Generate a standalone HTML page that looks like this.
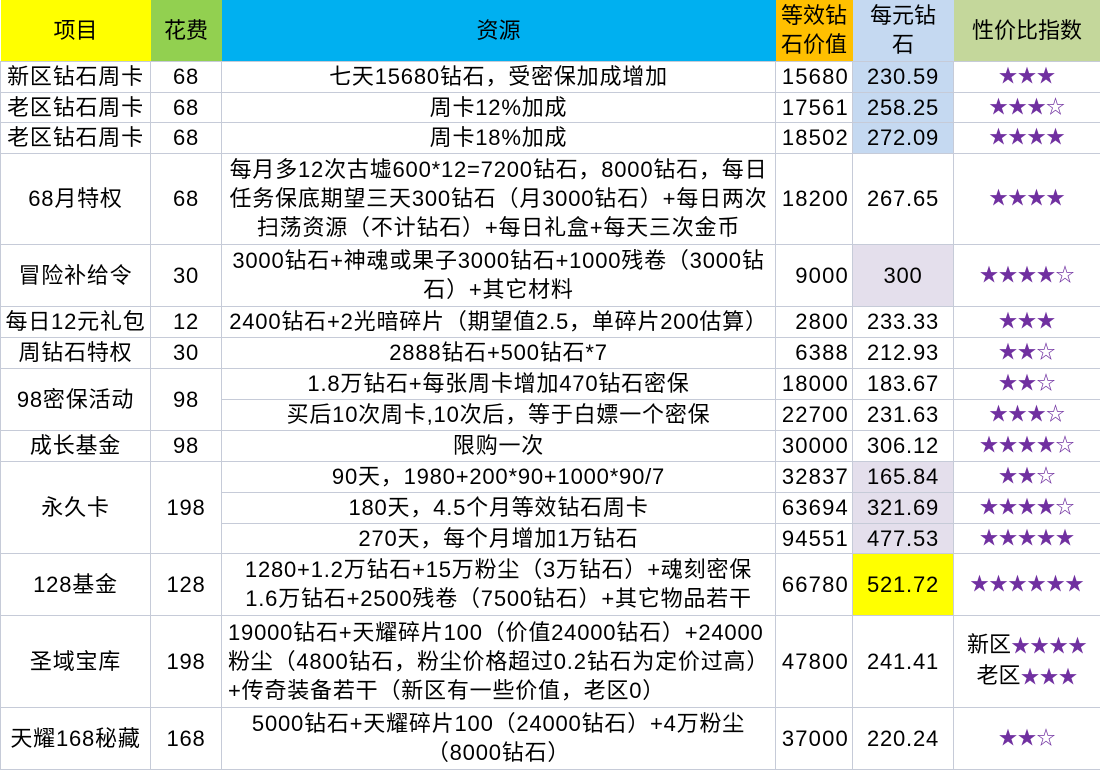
<!DOCTYPE html>
<html><head><meta charset="utf-8"><style>
body{margin:0;background:#fff;}
table{border-collapse:collapse;table-layout:fixed;width:1100px;font-family:"Liberation Sans","Noto Sans CJK SC",sans-serif;font-size:22px;letter-spacing:0.8px;color:#000;}
td{border:1px solid #c6cbd8;padding:0;text-align:center;vertical-align:middle;line-height:29px;overflow:hidden;white-space:nowrap;}
tr.h td{border:none;font-size:22px;letter-spacing:0;}
.s{color:#7030a0;font-size:19px;letter-spacing:0;}
.r{text-align:right;padding-right:3px;letter-spacing:1.2px;}
.b{background:#c5d9f1;}
.p{background:#e4dfec;}
.l{text-align:left;padding-left:6px;}
</style></head><body>
<table>
<colgroup><col style="width:150px"><col style="width:71px"><col style="width:554px"><col style="width:77px"><col style="width:101px"><col style="width:147px"></colgroup>
<tr class="h" style="height:61px"><td style="background:#ffff00">项目</td><td style="background:#92d050">花费</td><td style="background:#00b0f0">资源</td><td style="background:#ffc000;line-height:29px">等效钻<br>石价值</td><td style="background:#c5d9f1;line-height:29px">每元钻<br>石</td><td style="background:#c4d79b">性价比指数</td></tr>
<tr style="height:31px"><td>新区钻石周卡</td><td>68</td><td>七天15680钻石，受密保加成增加</td><td class="r">15680</td><td class="b">230.59</td><td class="s">★★★</td></tr>
<tr style="height:30px"><td>老区钻石周卡</td><td>68</td><td>周卡12%加成</td><td class="r">17561</td><td class="b">258.25</td><td class="s">★★★☆</td></tr>
<tr style="height:31px"><td>老区钻石周卡</td><td>68</td><td>周卡18%加成</td><td class="r">18502</td><td class="b">272.09</td><td class="s">★★★★</td></tr>
<tr style="height:91px"><td>68月特权</td><td>68</td><td>每月多12次古墟600*12=7200钻石，8000钻石，每日<br>任务保底期望三天300钻石（月3000钻石）+每日两次<br>扫荡资源（不计钻石）+每日礼盒+每天三次金币</td><td class="r">18200</td><td>267.65</td><td class="s">★★★★</td></tr>
<tr style="height:62px"><td>冒险补给令</td><td>30</td><td>3000钻石+神魂或果子3000钻石+1000残卷（3000钻<br>石）+其它材料</td><td class="r">9000</td><td class="p">300</td><td class="s">★★★★☆</td></tr>
<tr style="height:31px"><td>每日12元礼包</td><td>12</td><td>2400钻石+2光暗碎片（期望值2.5，单碎片200估算）</td><td class="r">2800</td><td>233.33</td><td class="s">★★★</td></tr>
<tr style="height:31px"><td>周钻石特权</td><td>30</td><td>2888钻石+500钻石*7</td><td class="r">6388</td><td>212.93</td><td class="s">★★☆</td></tr>
<tr style="height:31px"><td rowspan="2">98密保活动</td><td rowspan="2">98</td><td>1.8万钻石+每张周卡增加470钻石密保</td><td class="r">18000</td><td>183.67</td><td class="s">★★☆</td></tr>
<tr style="height:31px"><td>买后10次周卡,10次后，等于白嫖一个密保</td><td class="r">22700</td><td>231.63</td><td class="s">★★★☆</td></tr>
<tr style="height:31px"><td>成长基金</td><td>98</td><td>限购一次</td><td class="r">30000</td><td>306.12</td><td class="s">★★★★☆</td></tr>
<tr style="height:31px"><td rowspan="3">永久卡</td><td rowspan="3">198</td><td>90天，1980+200*90+1000*90/7</td><td class="r">32837</td><td class="p">165.84</td><td class="s">★★☆</td></tr>
<tr style="height:31px"><td>180天，4.5个月等效钻石周卡</td><td class="r">63694</td><td class="p">321.69</td><td class="s">★★★★☆</td></tr>
<tr style="height:30px"><td>270天，每个月增加1万钻石</td><td class="r">94551</td><td class="p">477.53</td><td class="s">★★★★★</td></tr>
<tr style="height:62px"><td>128基金</td><td>128</td><td>1280+1.2万钻石+15万粉尘（3万钻石）+魂刻密保<br>1.6万钻石+2500残卷（7500钻石）+其它物品若干</td><td class="r">66780</td><td style="background:#ffff00">521.72</td><td class="s">★★★★★★</td></tr>
<tr style="height:92px"><td>圣域宝库</td><td>198</td><td class="l">19000钻石+天耀碎片100（价值24000钻石）+24000<br>粉尘（4800钻石，粉尘价格超过0.2钻石为定价过高）<br>+传奇装备若干（新区有一些价值，老区0）</td><td class="r">47800</td><td>241.41</td><td style="letter-spacing:0">新区<span class="s">★★★★</span><br>老区<span class="s">★★★</span></td></tr>
<tr style="height:62px"><td>天耀168秘藏</td><td>168</td><td>5000钻石+天耀碎片100（24000钻石）+4万粉尘<br>（8000钻石）</td><td class="r">37000</td><td>220.24</td><td class="s">★★☆</td></tr>
</table>
</body></html>
